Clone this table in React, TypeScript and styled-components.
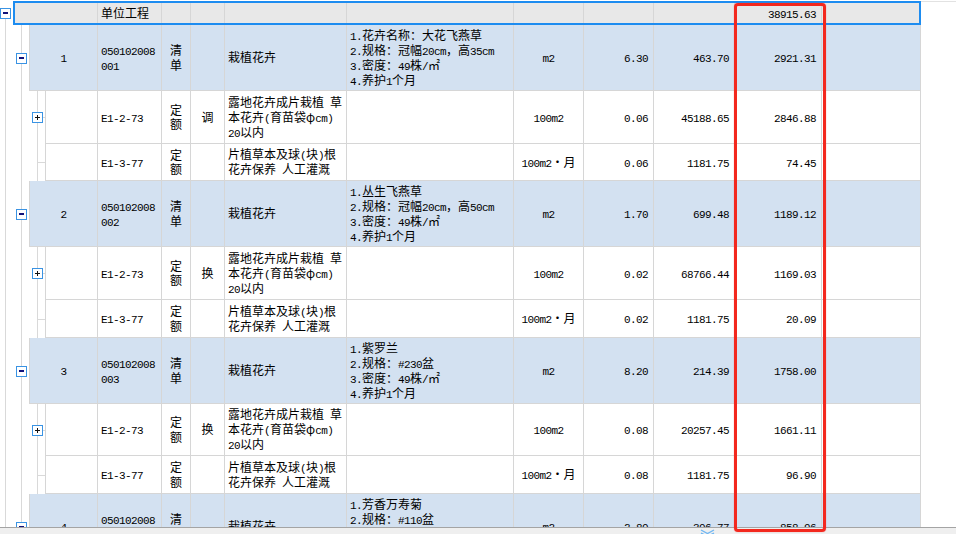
import React from "react";
import styled, { createGlobalStyle, css } from "styled-components";

const GRID = "#d6d6d6";
const TREE = "#d9d9d9";
const ROW_BLUE = "#d3e1f1";

type Level = 0 | 1 | 2;
type Align = "left" | "center" | "right";

const GUTTER = [13, 29, 45];
const PAD = [0, 16, 32];
const NUM_COL = [83, 68, 52];

const GlobalStyle = createGlobalStyle`
  *, *::before, *::after { box-sizing: border-box; }
  html, body { margin: 0; padding: 0; background: #fff; }
  body {
    font-family: "Noto Sans CJK SC", "Noto Sans", sans-serif;
    font-size: 12px;
    color: #000;
  }
  #root { width: 956px; height: 534px; }
`;

const Screen = styled.div`
  position: relative;
  width: 956px;
  height: 534px;
  overflow: hidden;
  display: flex;
  flex-direction: column;
  background: #fff;
`;

const Viewport = styled.div`
  flex: 1;
  min-height: 0;
  overflow: hidden;
  padding-top: 1px;
`;

const Row = styled.div<{ $h: number }>`
  display: flex;
  width: 956px;
  height: ${(p) => p.$h}px;
  flex: none;
`;

const vline = (x: number) =>
  `linear-gradient(${TREE}, ${TREE}) ${x}px 0 / 1px 100% no-repeat`;

const Gutter = styled.div<{ $level: Level }>`
  flex: none;
  display: flex;
  align-items: center;
  width: ${(p) => GUTTER[p.$level]}px;
  padding-left: ${(p) => PAD[p.$level]}px;
  background: ${(p) =>
    p.$level === 0
      ? `linear-gradient(${TREE}, ${TREE}) 5px 100% / 1px 50% no-repeat`
      : p.$level === 1
      ? `${vline(5)}, ${vline(21)}`
      : `${vline(5)}, ${vline(21)}, ${vline(37)}, linear-gradient(${TREE}, ${TREE}) 37px 50% / 8px 1px no-repeat`};
`;

const Expander = styled.span<{ $open: boolean }>`
  position: relative;
  flex: none;
  width: 11px;
  height: 11px;
  border: 1px solid #3a93e3;
  background: #fff;
  &::before {
    content: "";
    position: absolute;
    left: 2px;
    width: 5px;
    ${(p) =>
      p.$open
        ? css`
            top: 3px;
            height: 2px;
            background: #12127a;
          `
        : css`
            top: 4px;
            height: 1px;
            background: #111;
          `}
  }
  ${(p) =>
    !p.$open &&
    css`
      &::after {
        content: "";
        position: absolute;
        left: 4px;
        top: 2px;
        width: 1px;
        height: 5px;
        background: #111;
      }
    `}
`;

const Cells = styled.div<{ $level: Level }>`
  flex: none;
  width: ${(p) => 921 - GUTTER[p.$level]}px;
  display: grid;
  grid-template-columns: ${(p) => NUM_COL[p.$level]}px 64px 29px 34px 122px 167px 70px 70px 81px 87px 1fr;
  ${(p) =>
    p.$level === 0
      ? css`
          background: #e8e8e8;
          border: 2px solid #1d8cf0;
        `
      : css`
          background: ${p.$level === 1 ? ROW_BLUE : "#fff"};
          border-left: 1px solid ${GRID};
          border-right: 1px solid ${GRID};
          border-bottom: 1px solid ${GRID};
        `}
`;

const HeaderFiller = styled.div`
  flex: 1;
  border-top: 1px solid #e2e2e2;
`;

const Cell = styled.div<{ $align?: Align }>`
  display: flex;
  align-items: center;
  justify-content: ${(p) =>
    p.$align === "right" ? "flex-end" : p.$align === "center" ? "center" : "flex-start"};
  text-align: ${(p) => p.$align ?? "left"};
  padding: ${(p) => (p.$align === "right" ? "0 5px 0 3px" : "0 3px")};
  border-right: 1px solid ${GRID};
  min-width: 0;
  overflow: hidden;
  white-space: pre-line;
  line-height: 14.5px;
  &:last-child { border-right: none; }
`;

const Text = styled.span`
  display: block;
  min-width: 0;
`;

const Latin = styled.span`
  font-family: "Liberation Mono", "DejaVu Sans Mono", monospace;
  font-size: 11px;
  letter-spacing: -0.6px;
  line-height: 1;
`;

const Annotation = styled.div`
  position: absolute;
  left: 734px;
  top: 3px;
  width: 92px;
  height: 529px;
  border: 3px solid #f3281e;
  border-radius: 4px;
  box-shadow: 0 0 1px rgba(243, 40, 30, 0.7);
  pointer-events: none;
`;

const ScrollBar = styled.div`
  flex: none;
  height: 7px;
  border-top: 1px solid #a4a4a4;
  background: #efefef;
  display: flex;
  padding-left: 699px;
  padding-top: 1px;
`;

function Mixed({ text }: { text: string }) {
  const parts = text.split(/([\x20-\x7E]+)/).filter((s) => s.length > 0);
  return (
    <>
      {parts.map((p, i) =>
        /^[\x20-\x7E]+$/.test(p) ? <Latin key={i}>{p}</Latin> : <React.Fragment key={i}>{p}</React.Fragment>
      )}
    </>
  );
}

type Item = {
  level: 1 | 2;
  h: number;
  expander?: "open" | "closed";
  no?: string;
  code: string;
  type: string;
  adj?: string;
  name: string;
  feature?: string;
  unit: string;
  qty: string;
  price: string;
  total: string;
};

const NAME_A = "露地花卉成片栽植 草\n本花卉(育苗袋φcm)\n20以内";
const NAME_B = "片植草本及球(块)根\n花卉保养 人工灌溉";

const items: Item[] = [
  {
    level: 1, h: 66, expander: "open", no: "1", code: "050102008\n001", type: "清单", name: "栽植花卉",
    feature: "1.花卉名称：大花飞燕草\n2.规格：冠幅20cm，高35cm\n3.密度：49株/㎡\n4.养护1个月",
    unit: "m2", qty: "6.30", price: "463.70", total: "2921.31",
  },
  { level: 2, h: 53, expander: "closed", code: "E1-2-73", type: "定额", adj: "调", name: NAME_A, unit: "100m2", qty: "0.06", price: "45188.65", total: "2846.88" },
  { level: 2, h: 37, code: "E1-3-77", type: "定额", name: NAME_B, unit: "100m2・月", qty: "0.06", price: "1181.75", total: "74.45" },
  {
    level: 1, h: 66, expander: "open", no: "2", code: "050102008\n002", type: "清单", name: "栽植花卉",
    feature: "1.丛生飞燕草\n2.规格：冠幅20cm，高50cm\n3.密度：49株/㎡\n4.养护1个月",
    unit: "m2", qty: "1.70", price: "699.48", total: "1189.12",
  },
  { level: 2, h: 53, expander: "closed", code: "E1-2-73", type: "定额", adj: "换", name: NAME_A, unit: "100m2", qty: "0.02", price: "68766.44", total: "1169.03" },
  { level: 2, h: 38, code: "E1-3-77", type: "定额", name: NAME_B, unit: "100m2・月", qty: "0.02", price: "1181.75", total: "20.09" },
  {
    level: 1, h: 66, expander: "open", no: "3", code: "050102008\n003", type: "清单", name: "栽植花卉",
    feature: "1.紫罗兰\n2.规格：#230盆\n3.密度：49株/㎡\n4.养护1个月",
    unit: "m2", qty: "8.20", price: "214.39", total: "1758.00",
  },
  { level: 2, h: 52, expander: "closed", code: "E1-2-73", type: "定额", adj: "换", name: NAME_A, unit: "100m2", qty: "0.08", price: "20257.45", total: "1661.11" },
  { level: 2, h: 38, code: "E1-3-77", type: "定额", name: NAME_B, unit: "100m2・月", qty: "0.08", price: "1181.75", total: "96.90" },
  {
    level: 1, h: 66, expander: "open", no: "4", code: "050102008\n004", type: "清单", name: "栽植花卉",
    feature: "1.芳香万寿菊\n2.规格：#110盆\n3.密度：49株/㎡\n4.养护1个月",
    unit: "m2", qty: "2.80", price: "306.77", total: "858.96",
  },
];

function C({ align, text }: { align?: Align; text?: string }) {
  return (
    <Cell $align={align}>
      {text ? (
        <Text>
          <Mixed text={text} />
        </Text>
      ) : null}
    </Cell>
  );
}

function ItemRow({ item }: { item: Item }) {
  return (
    <Row $h={item.h}>
      <Gutter $level={item.level}>
        {item.expander && <Expander $open={item.expander === "open"} />}
      </Gutter>
      <Cells $level={item.level}>
        <C align="center" text={item.no} />
        <C text={item.code} />
        <C align="center" text={item.type} />
        <C align="center" text={item.adj} />
        <C text={item.name} />
        <C text={item.feature} />
        <C align="center" text={item.unit} />
        <C align="right" text={item.qty} />
        <C align="right" text={item.price} />
        <C align="right" text={item.total} />
        <C />
      </Cells>
    </Row>
  );
}

function Chevron() {
  return (
    <svg width="17" height="8" viewBox="0 0 17 8">
      <polyline points="2,1 8.5,4.5 15,1" fill="none" stroke="#6fb6f2" strokeWidth="1.4" />
      <polyline points="2,4 8.5,7.5 15,4" fill="none" stroke="#6fb6f2" strokeWidth="1.4" />
    </svg>
  );
}

export default function App() {
  return (
    <>
      <GlobalStyle />
      <Screen>
        <Viewport>
          <Row $h={24}>
            <Gutter $level={0}>
              <Expander $open />
            </Gutter>
            <Cells $level={0}>
              <C />
              <C text="单位工程" />
              <C />
              <C />
              <C />
              <C />
              <C />
              <C />
              <C />
              <C align="right" text="38915.63" />
              <C />
            </Cells>
            <HeaderFiller />
          </Row>
          {items.map((it, i) => (
            <ItemRow key={i} item={it} />
          ))}
        </Viewport>
        <ScrollBar>
          <Chevron />
        </ScrollBar>
        <Annotation />
      </Screen>
    </>
  );
}
